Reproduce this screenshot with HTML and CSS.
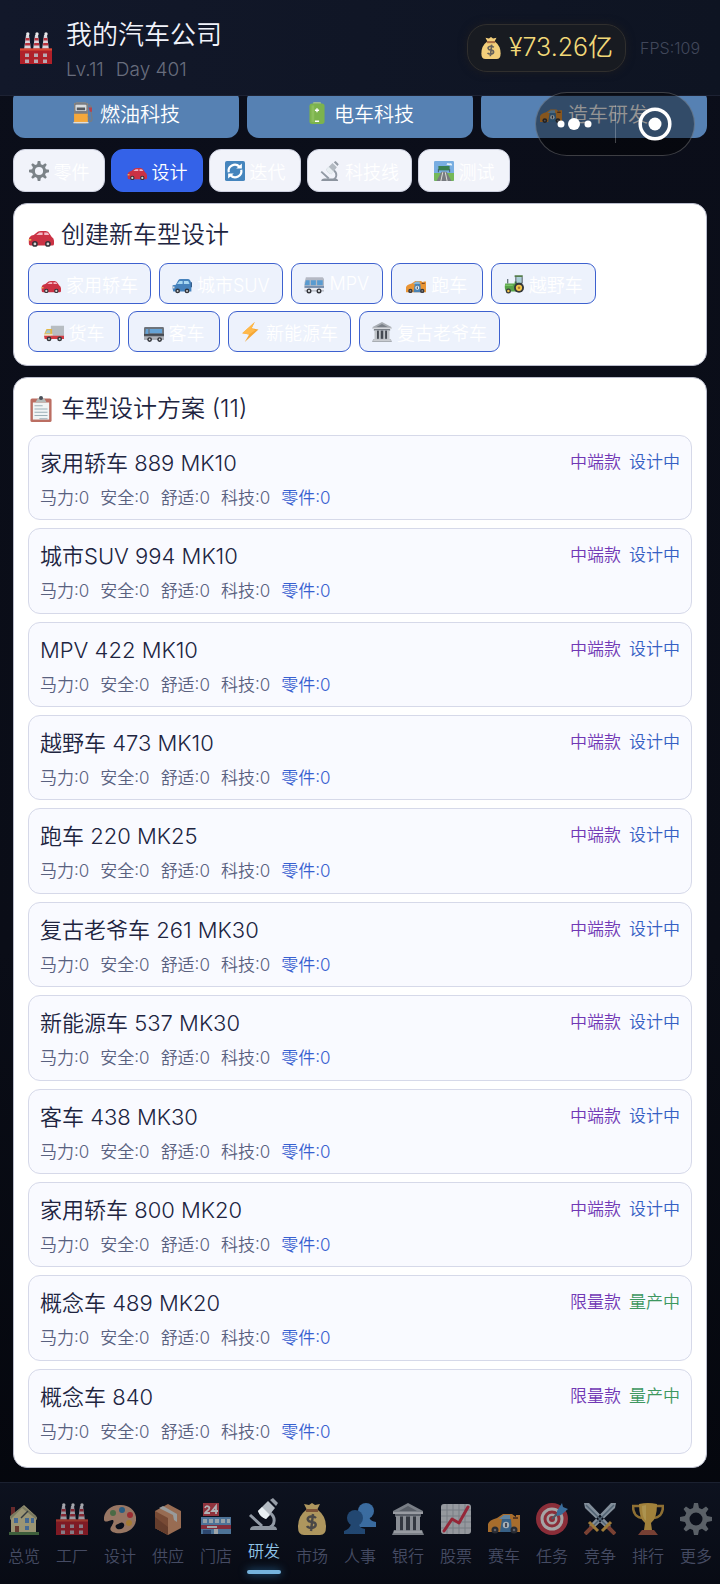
FILE: index.html
```html
<!DOCTYPE html>
<html lang="zh-CN">
<head>
<meta charset="utf-8">
<meta name="viewport" content="width=device-width, initial-scale=1">
<title>我的汽车公司</title>
<link rel="stylesheet" href="styles.css">
</head>
<body>
<svg class="sprite" aria-hidden="true">
  <symbol id="factory" viewBox="0 0 32 32"><path fill="#d9d5dc" d="M6 3h3l2 15H4zM15 3h3l2 15h-7zM24 3h3l2 15h-7z"/><path fill="#b8323d" d="M5.800 6h3.600l.3 2.500H5.500zM5.200 11h4.800l.3 2.500H5zM14.800 6h3.600l.3 2.500h-4.200zM14.200 11H19l.3 2.500H14zM23.800 6h3.600l.3 2.500h-4.200zM23.200 11H28l.3 2.500H23z"/><circle cx="7.800" cy="2" r="1.700" fill="#e8e8ea"/><circle cx="17" cy="2" r="1.700" fill="#e8e8ea"/><circle cx="26" cy="2" r="1.700" fill="#e8e8ea"/><path fill="#b02029" d="M0 16.500h32V32H0z"/><path fill="#d84a35" d="M0 16.500h32v2H0z"/><path fill="#b9a9b3" d="M5 21.500h4v3.500H5zM14 21.500h4v3.500h-4zM23 21.500h4v3.500h-4zM5 27.500h4V31H5zM14 27.500h4V31h-4zM23 27.500h4V31h-4z"/></symbol>
  <symbol id="fuel" viewBox="0 0 32 32"><rect x="3" y="1" width="20" height="30" rx="3" fill="#f5a83b"/><path fill="#7a7d83" d="M3 4a3 3 0 0 1 3-3h14a3 3 0 0 1 3 3v13H3z"/><rect x="5" y="4" width="16" height="9" rx="1.500" fill="#d9dde0"/><path fill="#555a61" d="M7 8h12v4H7z"/><path fill="none" stroke="#787c84" stroke-width="2" d="M23 21c4 0 0 7 4 7 3 0 2-6 1-12V7l-4-4"/><path fill="#b94148" d="M24 8h5v6h-3z"/><path fill="#dedede" d="M2 29h22v2H2z"/></symbol>
  <symbol id="battery" viewBox="0 0 32 32"><rect x="10" y="0" width="12" height="5" rx="2" fill="#9dbb92"/><rect x="5" y="2" width="22" height="30" rx="4" fill="#7cb34d"/><path fill="#8cbf5d" d="M8 5h4v24H8z"/><path stroke="#fff" stroke-width="2" d="M13 12h6M16 9v6M13 28h6"/></symbol>
  <symbol id="racecar" viewBox="0 0 32 32"><path fill="#e99535" d="M0 29v-8q1-4 9-6l6-4h9l4 3V12h4v17z"/><path fill="#84b5d9" d="M12 15l4-3h6v4H11z"/><path fill="#4a83b4" d="M14 16h9l1 13H12z"/><path fill="#7f4b23" d="M25 14h5v2h-5z"/><circle cx="18" cy="22" r="3.200" fill="#e7f1f5"/><path stroke="#334" stroke-width="1.500" d="M18 20v4"/><g fill="#35373d"><circle cx="7" cy="27" r="3.500"/><circle cx="26" cy="27" r="3.500"/></g><g fill="#868489"><circle cx="7" cy="27" r="1.300"/><circle cx="26" cy="27" r="1.300"/></g></symbol>
  <symbol id="gear" viewBox="0 0 32 32"><path fill="#7c8388" fill-rule="evenodd" d="M14 0h4l1 5 3 1.300L26 3.500 28.500 6 25.700 10 27 13l5 1v4l-5 1-1.300 3 2.800 4-2.500 2.500-4-2.800L19 27l-1 5h-4l-1-5-3-1.300L6 28.500 3.500 26l2.800-4L5 19l-5-1v-4l5-1 1.300-3L3.500 6 6 3.500l4 2.800L13 5zm2 9.500a6.500 6.500 0 1 0 0 13 6.500 6.500 0 0 0 0-13z"/></symbol>
  <symbol id="car" viewBox="0 0 32 32"><path fill="#cb3244" d="M1 22q0-5 6-6l5-4q1-1 4-1h6q3 0 5 4l2 3q3 2 3 5v4q0 2-2 2H3q-2 0-2-3z"/><path fill="#f4b9c5" d="M10 16l4-3h4v3zM20 13h3q2 0 3 3h-6z"/><path fill="#f0b84c" d="M1 21h3v2H1z"/><g fill="#313238"><circle cx="8.500" cy="27" r="3.500"/><circle cx="24.500" cy="27" r="3.500"/></g><g fill="#d9d4d4"><circle cx="8.500" cy="27" r="1.700"/><circle cx="24.500" cy="27" r="1.700"/></g></symbol>
  <symbol id="refresh" viewBox="0 0 32 32"><rect width="32" height="32" rx="3" fill="#4585bd"/><path fill="none" stroke="#fff" stroke-width="3.500" d="M6 18a10 10 0 0 1 17-9M26 14a10 10 0 0 1-17 9"/><path fill="#fff" d="M18 12h9V4zM14 20H5v8z"/></symbol>
  <symbol id="microscope" viewBox="0 0 32 32"><path fill="none" stroke="#929aa5" stroke-width="3" d="M22 15c6 4 5 12 0 14M2 17l12 11"/><path fill="#b3bac2" d="M10 13L20 3l7 7-9 11q-6-2-8-8z"/><path fill="#e8eef2" d="M10 13l4-4 8 8-4 4q-6-2-8-8z"/><path fill="#959ca6" d="M22 2l3-2 5 5-2 3z"/><path fill="#8c949e" d="M2 32q0-4 5-4h17q5 0 5 4z"/></symbol>
  <symbol id="motorway" viewBox="0 0 32 32"><rect width="32" height="32" rx="2" fill="#78ade1"/><path fill="#75b858" d="M0 19h32v11q0 2-2 2H2q-2 0-2-2z"/><path fill="#777b80" d="M12 17h8l8 15H4z"/><path stroke="#e5e5df" stroke-width="1.500" d="M14 18L11 32M18 18l3 14"/><path fill="#e9f4fa" d="M20 6q1-4 4-2 5-2 5 3z"/><path fill="#397f4f" d="M7 8h18v7H7z"/><path stroke="#456" stroke-width="1.500" d="M7 13v5M25 13v5"/></symbol>
  <symbol id="suv" viewBox="0 0 32 32"><path fill="#4682bc" d="M1 18l5-1 4-7q1-2 4-2h12q3 0 4 4l1 5v11H2q-2-5-1-10z"/><path fill="#a9d8f1" d="M8 16l4-5h5v5zM19 11h7l2 5h-9z"/><path fill="#335d8b" d="M30 13h2v8h-2z"/><path fill="#ddd" d="M1 20h3v3H1z"/><g fill="#34363c"><circle cx="9" cy="27" r="3.800"/><circle cx="24" cy="27" r="3.800"/></g><g fill="#dce1e4"><circle cx="9" cy="27" r="1.500"/><circle cx="24" cy="27" r="1.500"/></g></symbol>
  <symbol id="minibus" viewBox="0 0 32 32"><path fill="#b4b9c4" d="M3 5h27l2 3v20H1q-1-7 0-15z"/><path fill="#599bd0" d="M3 10h6v8H1zM11 10h8v8h-8zM21 10h9v8h-9z"/><path fill="#3b6596" d="M1 20h31v2H1z"/><path fill="#e8eaf0" d="M0 22h32v4H0z"/><g fill="#34363c"><circle cx="8" cy="27" r="4"/><circle cx="24" cy="27" r="4"/></g><g fill="#dce1e4"><circle cx="8" cy="27" r="1.700"/><circle cx="24" cy="27" r="1.700"/></g></symbol>
  <symbol id="tractor" viewBox="0 0 32 32"><path fill="#57a348" d="M2 15h15v-3h10l3 9-8 7H3q-3-5-1-13z"/><path fill="#557d4b" d="M17 2h13v3H17z"/><path fill="#a9cfd7" d="M20 5h8v10h-8z"/><path fill="none" stroke="#32434c" stroke-width="1.500" d="M19 5v10h10V5M6 15V8"/><path fill="#82c76c" d="M2 17h12v2H2z"/><circle cx="24" cy="22" r="8" fill="#34383a"/><circle cx="24" cy="22" r="5" fill="#f4c64b"/><circle cx="24" cy="22" r="2" fill="#aa782f"/><circle cx="7" cy="27" r="4" fill="#34383a"/><circle cx="7" cy="27" r="2" fill="#f4c64b"/></symbol>
  <symbol id="truck" viewBox="0 0 32 32"><path fill="#b7bdc2" d="M11 6h21v17H11z"/><path fill="#e3b847" d="M4 11h9v9H0z"/><path fill="#9fc8d5" d="M5 13h5v5H2z"/><path fill="#ede0bd" d="M0 19h14v3H0z"/><path fill="#d23c44" d="M0 22h32v5H1z"/><g fill="#35373b"><circle cx="8" cy="27" r="3.800"/><circle cx="25" cy="27" r="3.800"/></g><g fill="#ccc"><circle cx="8" cy="27" r="1.500"/><circle cx="25" cy="27" r="1.500"/></g></symbol>
  <symbol id="bus" viewBox="0 0 32 32"><path fill="#6d737b" d="M0 10q0-2 2-2h29l1 2v18H0z"/><path fill="#65a3d6" d="M3 11h4v8H2zM9 11h20v7H9z"/><path fill="#454951" d="M0 19h32v3H0z"/><path fill="#b0b4bb" d="M0 23h32v4H0z"/><g fill="#303238"><circle cx="9" cy="28" r="3.800"/><circle cx="25" cy="28" r="3.800"/></g><g fill="#d7dadc"><circle cx="9" cy="28" r="1.500"/><circle cx="25" cy="28" r="1.500"/></g></symbol>
  <symbol id="bolt" viewBox="0 0 32 32"><path fill="#f5a735" d="M22 0L2 18l11 2-7 12 22-20-11-2z"/><path fill="#ffb94a" d="M22 0L2 18l11 2 10-7-6-3z"/></symbol>
  <symbol id="bank" viewBox="0 0 32 32"><path fill="#a8adb3" d="M16 0l15 8v3H1V8zM2 27h28l2 5H0z"/><path fill="#7a8088" d="M16 3l9 5H7zM3 11h26v3H3z"/><path fill="#444951" d="M5 14h22v13H5z"/><path fill="#bfc3c8" d="M4 13h4v15H4zM11 13h3v15h-3zM18 13h3v15h-3zM24 13h4v15h-4z"/><path fill="#d5d8dc" d="M1 9h30v2H1zM2 28h28v2H2z"/></symbol>
  <symbol id="clipboard" viewBox="0 0 32 32"><rect x="3" y="3" width="26" height="29" rx="2" fill="#bb6e62"/><path fill="#f1f4f4" d="M6 8h20v21H6z"/><path fill="#b4bab8" d="M9 8l3-5h8l3 5z"/><circle cx="16" cy="2.500" r="2.500" fill="#494f58"/><path stroke="#9cafb7" stroke-width="1.500" d="M8 12h10M8 16h16M8 20h16M8 24h16M14 28h10"/></symbol>
  <symbol id="house" viewBox="0 0 32 32"><path fill="#8e3533" d="M3 4h4v8H3z"/><path fill="#d8ce9b" d="M3 13L16 2l12 11v17H3z"/><path fill="#aaa77e" d="M15 3l14 11v3L14 5 2 17v-4z"/><path stroke="#444b50" stroke-width="1.500" d="M13 15l7-7"/><path fill="#5e8fc8" d="M6 15h4v5H6zM17 15h4v5h-4zM23 15h3v5h-3zM17 23h4v4h-4z"/><path fill="#8b4d3c" d="M7 23h4v7H7z"/><path fill="#53804a" d="M1 29h30v3H1z"/></symbol>
  <symbol id="palette" viewBox="0 0 32 32"><path fill="#d3a283" fill-rule="evenodd" d="M17 2C7 1-1 9 0 17c1 3 4 1 8 0 3 0 1 4-1 7-3 5 5 7 11 6 9-1 15-8 14-16C31 7 25 2 17 2zm-1 18c3-2 6 2 3 5-4 3-9 0-7-3 1-1 3-1 4-2z"/><circle cx="9" cy="10" r="3" fill="#659157"/><circle cx="18" cy="7" r="3" fill="#387eae"/><circle cx="26" cy="12" r="3" fill="#d8383c"/><circle cx="25" cy="20" r="3" fill="#e5a93d"/></symbol>
  <symbol id="package" viewBox="0 0 32 32"><path fill="#d4946b" d="M3 8L16 1l13 7v17l-13 7-13-7z"/><path fill="#a56340" d="M3 8l13 7v17L3 25z"/><path fill="#8b5135" d="M3 14l13 10v8L3 25z"/><path fill="#d4d7d3" d="M7 5l4-2 14 8v8l-3-2-1-5z"/></symbol>
  <symbol id="store" viewBox="0 0 32 32"><path fill="#c9424b" d="M3 0h16v13H3z"/><path fill="none" stroke="#f5f5f5" stroke-width="1.800" d="M5 5q1-3 4-1c2 2-4 5-4 6h5M16 11V3l-4 5h6"/><path fill="#6a9ecd" d="M1 14h30v17H1z"/><path fill="#d2e1e7" d="M3 16h4v4H3zM9 16h4v4H9zM15 16h4v4h-4zM21 16h4v4h-4zM27 16h3v4h-3z"/><path fill="#b63a49" d="M1 22h30v4H1z"/><path fill="#e0e7e7" d="M7 23h10v2H7zM14 26h4v5h-4z"/><path fill="#3b5f93" d="M3 27h8v4H3z"/></symbol>
  <symbol id="money" viewBox="0 0 32 32"><path fill="#f3cf7b" d="M10 7h12q8 6 8 17 0 8-6 8H8q-6 0-6-8Q2 13 10 7z"/><path fill="#f3cf7b" d="M8 1l5 1 3-2 3 2 5-1-3 6H11z"/><path fill="#ad7044" d="M10 6h12v3H10z"/><path fill="none" stroke="#65605a" stroke-width="2.400" d="M20 15q-2-2-5-1.500c-5 1-4 5 1 5.500s5 5 0 6q-4 0-5-2M17 11l-2 17"/></symbol>
  <symbol id="people" viewBox="0 0 32 32"><g fill="#4f93d8"><circle cx="22" cy="8" r="8"/><path d="M18 13h7q0 5 7 6v5H14z"/></g><g fill="#2c5f96"><circle cx="11" cy="15" r="8"/><path d="M7 21h8q0 4 6 5v5H0v-3q6-2 7-7z"/></g></symbol>
  <symbol id="chart" viewBox="0 0 32 32"><rect x="1" y="1" width="30" height="30" rx="3" fill="#d0d3d6"/><path stroke="#a5acb1" d="M7 1v30M13 1v30M19 1v30M25 1v30M1 7h30M1 13h30M1 19h30M1 25h30"/><path fill="none" stroke="#cf3044" stroke-width="3" stroke-linecap="round" stroke-linejoin="round" d="M4 28l8-12 7 4 9-16"/></symbol>
  <symbol id="target" viewBox="0 0 32 32"><circle cx="16" cy="16" r="16" fill="#c23b46"/><circle cx="16" cy="16" r="11.500" fill="#e6e4e0"/><circle cx="16" cy="16" r="8.500" fill="#c23b46"/><circle cx="16" cy="16" r="5.500" fill="#e6e4e0"/><circle cx="16" cy="16" r="3" fill="#c23b46"/><path stroke="#667783" stroke-width="2" d="M16 16L26 6"/><path fill="#4d95d2" d="M21 8l5-8 1 4 5 2-7 6-4 1z"/></symbol>
  <symbol id="swords" viewBox="0 0 32 32"><path fill="#b5c4d0" d="M0 0h5l22 23-4 3L1 5zM32 0h-5L5 23l4 3L31 5z"/><path stroke="#708899" stroke-width="1.500" d="M2 2l22 22M30 2L8 24"/><path stroke="#dda946" stroke-width="3" d="M18 28l9-9M5 19l9 9"/><path stroke="#a9573e" stroke-width="4" d="M24 24l7 7M8 24l-7 7"/></symbol>
  <symbol id="trophy" viewBox="0 0 32 32"><path fill="none" stroke="#c5983d" stroke-width="2.500" d="M8 3H1q0 11 9 12M24 3h7q0 11-9 12"/><path fill="#e0b149" d="M7 1q9-2 18 0 0 15-6 19l1 7h-8l1-7Q7 16 7 1z"/><path fill="#f0cb66" d="M10 3q0 12 4 15V2z"/><path fill="#a5553f" d="M10 27h12l4 5H6z"/></symbol>
</svg>

<header class="topbar">
  <svg class="icon icon-logo"><use href="#factory"/></svg>
  <div class="company">
    <h1>我的汽车公司</h1>
    <p><span>Lv.11</span><span>Day 401</span></p>
  </div>
  <div class="cash"><svg class="icon icon-cash"><use href="#money"/></svg><span>¥73.26亿</span></div>
  <span class="fps">FPS:109</span>
</header>

<div class="capsule">
  <button class="capsule-btn" aria-label="菜单"><svg width="44" height="34" viewBox="0 0 44 34" fill="#fff"><circle cx="8" cy="17" r="3.500"/><circle cx="21" cy="17" r="6"/><circle cx="35" cy="17" r="3.500"/></svg></button>
  <span class="capsule-line"></span>
  <button class="capsule-btn" aria-label="关闭"><svg width="34" height="34" viewBox="0 0 34 34"><circle cx="17" cy="17" r="14.800" fill="none" stroke="#fff" stroke-width="3.500"/><circle cx="17" cy="17" r="6.500" fill="#fff"/></svg></button>
</div>

<main class="content">
  <div class="tech-row">
    <button class="tech"><svg class="icon icon-m"><use href="#fuel"/></svg>燃油科技</button>
    <button class="tech"><svg class="icon icon-m"><use href="#battery"/></svg>电车科技</button>
    <button class="tech"><svg class="icon icon-m"><use href="#racecar"/></svg>造车研发</button>
  </div>

  <div class="tabs">
    <button class="tab"><svg class="icon icon-s"><use href="#gear"/></svg>零件</button>
    <button class="tab tab-active"><svg class="icon icon-s"><use href="#car"/></svg>设计</button>
    <button class="tab"><svg class="icon icon-s"><use href="#refresh"/></svg>迭代</button>
    <button class="tab"><svg class="icon icon-s"><use href="#microscope"/></svg>科技线</button>
    <button class="tab"><svg class="icon icon-s"><use href="#motorway"/></svg>测试</button>
  </div>

  <section class="card">
    <h2><svg class="icon icon-l"><use href="#car"/></svg>创建新车型设计</h2>
    <div class="chips">
      <button class="chip"><svg class="icon icon-s"><use href="#car"/></svg>家用轿车</button>
      <button class="chip"><svg class="icon icon-s"><use href="#suv"/></svg>城市SUV</button>
      <button class="chip"><svg class="icon icon-s"><use href="#minibus"/></svg>MPV</button>
      <button class="chip"><svg class="icon icon-s"><use href="#racecar"/></svg>跑车</button>
      <button class="chip"><svg class="icon icon-s"><use href="#tractor"/></svg>越野车</button>
      <button class="chip"><svg class="icon icon-s"><use href="#truck"/></svg>货车</button>
      <button class="chip"><svg class="icon icon-s"><use href="#bus"/></svg>客车</button>
      <button class="chip"><svg class="icon icon-s"><use href="#bolt"/></svg>新能源车</button>
      <button class="chip"><svg class="icon icon-s"><use href="#bank"/></svg>复古老爷车</button>
    </div>
  </section>

  <section class="card card-list">
    <h2><svg class="icon icon-l"><use href="#clipboard"/></svg>车型设计方案 (11)</h2>
    <ul class="designs">
      <li class="design"><div class="design-head"><h3>家用轿车 889 MK10</h3><span class="grade">中端款</span><span class="state">设计中</span></div><p class="stats"><span>马力:0</span><span>安全:0</span><span>舒适:0</span><span>科技:0</span><span class="parts">零件:0</span></p></li>
      <li class="design"><div class="design-head"><h3>城市SUV 994 MK10</h3><span class="grade">中端款</span><span class="state">设计中</span></div><p class="stats"><span>马力:0</span><span>安全:0</span><span>舒适:0</span><span>科技:0</span><span class="parts">零件:0</span></p></li>
      <li class="design"><div class="design-head"><h3>MPV 422 MK10</h3><span class="grade">中端款</span><span class="state">设计中</span></div><p class="stats"><span>马力:0</span><span>安全:0</span><span>舒适:0</span><span>科技:0</span><span class="parts">零件:0</span></p></li>
      <li class="design"><div class="design-head"><h3>越野车 473 MK10</h3><span class="grade">中端款</span><span class="state">设计中</span></div><p class="stats"><span>马力:0</span><span>安全:0</span><span>舒适:0</span><span>科技:0</span><span class="parts">零件:0</span></p></li>
      <li class="design"><div class="design-head"><h3>跑车 220 MK25</h3><span class="grade">中端款</span><span class="state">设计中</span></div><p class="stats"><span>马力:0</span><span>安全:0</span><span>舒适:0</span><span>科技:0</span><span class="parts">零件:0</span></p></li>
      <li class="design"><div class="design-head"><h3>复古老爷车 261 MK30</h3><span class="grade">中端款</span><span class="state">设计中</span></div><p class="stats"><span>马力:0</span><span>安全:0</span><span>舒适:0</span><span>科技:0</span><span class="parts">零件:0</span></p></li>
      <li class="design"><div class="design-head"><h3>新能源车 537 MK30</h3><span class="grade">中端款</span><span class="state">设计中</span></div><p class="stats"><span>马力:0</span><span>安全:0</span><span>舒适:0</span><span>科技:0</span><span class="parts">零件:0</span></p></li>
      <li class="design"><div class="design-head"><h3>客车 438 MK30</h3><span class="grade">中端款</span><span class="state">设计中</span></div><p class="stats"><span>马力:0</span><span>安全:0</span><span>舒适:0</span><span>科技:0</span><span class="parts">零件:0</span></p></li>
      <li class="design"><div class="design-head"><h3>家用轿车 800 MK20</h3><span class="grade">中端款</span><span class="state">设计中</span></div><p class="stats"><span>马力:0</span><span>安全:0</span><span>舒适:0</span><span>科技:0</span><span class="parts">零件:0</span></p></li>
      <li class="design"><div class="design-head"><h3>概念车 489 MK20</h3><span class="grade">限量款</span><span class="state state-live">量产中</span></div><p class="stats"><span>马力:0</span><span>安全:0</span><span>舒适:0</span><span>科技:0</span><span class="parts">零件:0</span></p></li>
      <li class="design"><div class="design-head"><h3>概念车 840</h3><span class="grade">限量款</span><span class="state state-live">量产中</span></div><p class="stats"><span>马力:0</span><span>安全:0</span><span>舒适:0</span><span>科技:0</span><span class="parts">零件:0</span></p></li>
    </ul>
  </section>
</main>

<nav class="nav">
  <button class="nav-item"><svg class="icon icon-nav"><use href="#house"/></svg><span>总览</span></button>
  <button class="nav-item"><svg class="icon icon-nav"><use href="#factory"/></svg><span>工厂</span></button>
  <button class="nav-item"><svg class="icon icon-nav"><use href="#palette"/></svg><span>设计</span></button>
  <button class="nav-item"><svg class="icon icon-nav"><use href="#package"/></svg><span>供应</span></button>
  <button class="nav-item"><svg class="icon icon-nav"><use href="#store"/></svg><span>门店</span></button>
  <button class="nav-item nav-active"><svg class="icon icon-nav"><use href="#microscope"/></svg><span>研发</span></button>
  <button class="nav-item"><svg class="icon icon-nav"><use href="#money"/></svg><span>市场</span></button>
  <button class="nav-item"><svg class="icon icon-nav"><use href="#people"/></svg><span>人事</span></button>
  <button class="nav-item"><svg class="icon icon-nav"><use href="#bank"/></svg><span>银行</span></button>
  <button class="nav-item"><svg class="icon icon-nav"><use href="#chart"/></svg><span>股票</span></button>
  <button class="nav-item"><svg class="icon icon-nav"><use href="#racecar"/></svg><span>赛车</span></button>
  <button class="nav-item"><svg class="icon icon-nav"><use href="#target"/></svg><span>任务</span></button>
  <button class="nav-item"><svg class="icon icon-nav"><use href="#swords"/></svg><span>竞争</span></button>
  <button class="nav-item"><svg class="icon icon-nav"><use href="#trophy"/></svg><span>排行</span></button>
  <button class="nav-item"><svg class="icon icon-nav"><use href="#gear"/></svg><span>更多</span></button>
</nav>
</body>
</html>
```

FILE: styles.css
```css
* { box-sizing: border-box; margin: 0; padding: 0; }

body {
  position: relative;
  display: flex;
  flex-direction: column;
  min-height: 100vh;
  background: linear-gradient(#0b0e1a, #0a0d17 60%, #04060c);
  color: #20243f;
  font-family: Inter, "Noto Sans CJK SC", sans-serif;
  font-weight: 350;
}

button {
  border: 0;
  background: none;
  color: inherit;
  font: inherit;
  cursor: pointer;
}

h1, h2, h3 { font-weight: 350; }

.sprite { display: none; }
.icon { flex: none; display: block; }
.icon-s { width: 20px; height: 20px; }
.icon-m { width: 22px; height: 22px; }
.icon-l { width: 26px; height: 26px; }
.icon-cash { width: 22px; height: 24px; }
.icon-logo, .icon-nav { width: 32px; height: 32px; }
.icon-logo { height: 34px; }

.topbar {
  position: relative;
  z-index: 1;
  display: flex;
  align-items: center;
  height: 96px;
  padding: 0 20px;
  border-bottom: 1px solid #1d2233;
  background: linear-gradient(90deg, #12182a, #0e1422);
}

.company { flex: 1; padding: 6px 0 0 14px; }
.company h1 { color: #f1f3fb; font-size: 26px; line-height: 38px; }
.company p { display: flex; gap: 12px; color: #686d7d; font-size: 19px; line-height: 32px; }

.cash {
  display: flex;
  align-items: center;
  gap: 7px;
  height: 48px;
  padding: 0 12px;
  border: 1px solid #302f2e;
  border-radius: 20px;
  background: #181b21;
  box-shadow: 0 0 8px #1c1c20;
  color: #f2d978;
  font-size: 25px;
  line-height: 36px;
}

.cash span { padding-bottom: 2px; }

.fps { padding-left: 14px; color: #41475a; font-size: 16px; }

.capsule {
  position: absolute;
  top: 92px;
  right: 25px;
  z-index: 2;
  display: flex;
  align-items: center;
  width: 160px;
  height: 64px;
  border: 1px solid rgba(255, 255, 255, .22);
  border-radius: 32px;
  background: rgba(0, 0, 0, .42);
}

.capsule-btn { flex: 1; display: flex; justify-content: center; }
.capsule-line { width: 1px; height: 38px; background: rgba(255, 255, 255, .25); }

.content {
  flex: 1;
  display: flex;
  flex-direction: column;
  gap: 11px;
  margin-top: -8px;
  padding: 0 13px 14px;
}

.tech-row { display: grid; grid-template-columns: repeat(3, 1fr); gap: 8px; }

.tech {
  display: flex;
  align-items: center;
  justify-content: center;
  gap: 6px;
  height: 50px;
  border-radius: 12px;
  background: #5681b3;
  color: #fff;
  font-size: 20px;
}

.tabs { display: flex; gap: 6px; }

.tab, .chip {
  display: flex;
  align-items: center;
  justify-content: center;
  gap: 5px;
  min-width: 92px;
  padding: 0 12px;
  color: #fff;
  font-size: 18px;
}

.tab {
  height: 43px;
  border: 1px solid #cdd0df;
  border-radius: 12px;
  background: #f1f3fa;
}

.tab-active { border-color: #3564ea; background: #3462e8; }

.card {
  padding: 13px 14px;
  border: 1px solid #babdcc;
  border-radius: 14px;
  background: #fff;
}

.card h2 {
  display: flex;
  align-items: center;
  gap: 7px;
  font-size: 24px;
  line-height: 36px;
}

.chips { display: flex; flex-wrap: wrap; gap: 7px 8px; padding-top: 10px; }

.chip {
  height: 41px;
  border: 1px solid #3d61cf;
  border-radius: 9px;
  background: #edf2fc;
}

.card-list { flex: 1; display: flex; flex-direction: column; }

.designs {
  flex: 1;
  display: grid;
  grid-auto-rows: 1fr;
  gap: 8px;
  padding-top: 8px;
  list-style: none;
}

.design {
  padding: 10px 11px 4px;
  border: 1px solid #d6d9e9;
  border-radius: 12px;
  background: #f9faff;
}

.design-head { display: flex; gap: 8px; }
.design h3 { flex: 1; font-size: 22px; line-height: 34px; }
.grade, .state { font-size: 17px; line-height: 32px; }
.grade { color: #7138b5; }
.state { color: #3560c4; }
.state-live { color: #3d9760; }
.stats { display: flex; gap: 11px; padding-top: 3px; color: #59617f; font-size: 17px; line-height: 30px; }
.parts { color: #3860d0; }

.nav {
  display: grid;
  grid-template-columns: repeat(15, 1fr);
  height: 102px;
  border-top: 1px solid #1b2130;
  background: linear-gradient(#0d121f, #080b14);
}

.nav-item {
  position: relative;
  display: flex;
  flex-direction: column;
  align-items: center;
  gap: 9px;
  padding-top: 20px;
  color: #454b63;
  font-size: 16px;
  line-height: 24px;
}

.nav-item .icon { opacity: .7; }
.nav-active { padding-top: 15px; color: #8fc4e8; }
.nav-active .icon { opacity: 1; }

.nav-active::after {
  content: "";
  position: absolute;
  right: 7px;
  bottom: 10px;
  left: 7px;
  height: 4px;
  border-radius: 2px;
  background: #75b3dd;
  box-shadow: 0 0 8px #28699b;
}
```
